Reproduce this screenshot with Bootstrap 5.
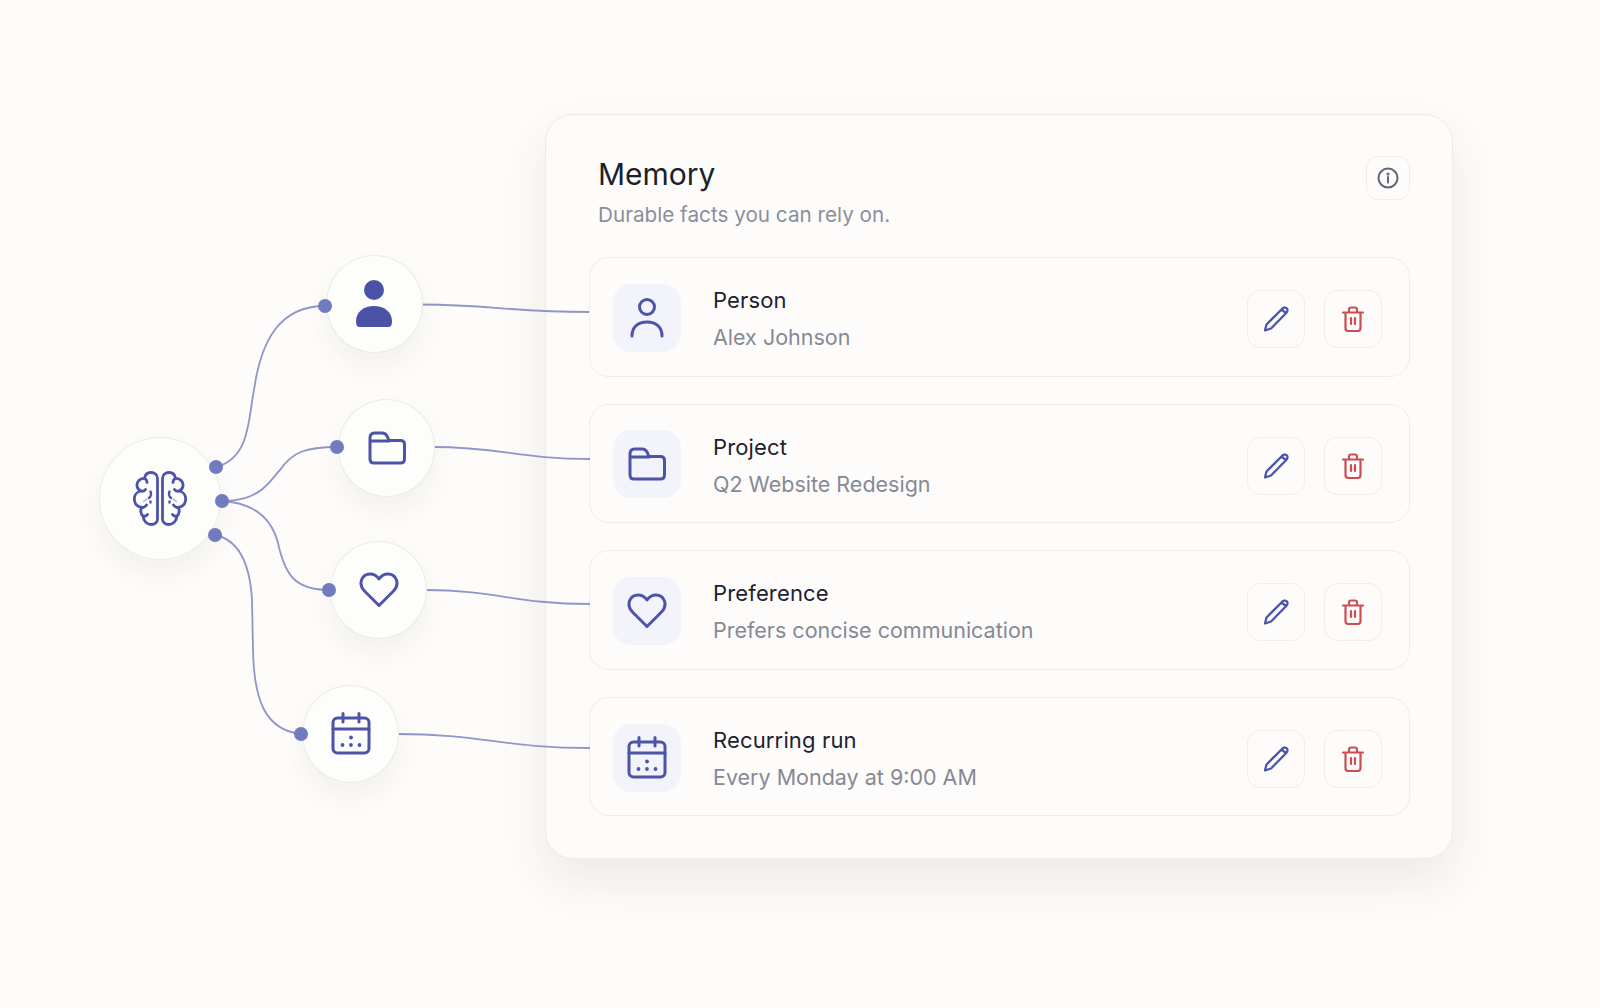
<!DOCTYPE html>
<html lang="en">
<head>
<meta charset="utf-8">
<title>Memory</title>
<link href="https://cdn.jsdelivr.net/npm/bootstrap@5.3.0/dist/css/bootstrap.min.css" rel="stylesheet">
<style>
html,body{height:100%;overflow:hidden}
body{background:#fdfcfa;font-family:Inter,"Liberation Sans",sans-serif;-webkit-font-smoothing:antialiased}
.stage{width:1600px;height:1008px;padding:114px 0 0 545px}
.wires{position:absolute;left:0;top:0;z-index:2;pointer-events:none}
.wires path{fill:none;stroke:#9095ca;stroke-width:1.8}
.pins{position:absolute;left:0;top:0;z-index:4;pointer-events:none}
.pins circle{fill:#717cc0}
.node{position:absolute;width:97px;height:98px;border-radius:50%;background:#fdfdfc;border:1.5px solid #ecebe8;box-shadow:0 14px 28px rgba(70,60,50,.06);z-index:3}
.node-brain{left:98.500px;top:436.500px;width:122px;height:123px}
.node-person{left:325.500px;top:254.500px}
.node-folder{left:337.500px;top:398.500px;padding-left:2px}
.node-heart{left:329.500px;top:540.500px;padding-left:2px}
.node-cal{left:301.500px;top:684.500px;padding-left:2px}
.ico{fill:none;stroke:#4c54aa;stroke-width:3;stroke-linecap:round;stroke-linejoin:round}
.panel{width:908px;height:745px;background:#fdfcfb;border:1.5px solid #ecebe8;border-radius:28px;box-shadow:0 22px 50px rgba(70,60,50,.09);padding:0 42px 0 42.500px}
.panel-head{height:142px;padding:41px 0 0 9.500px}
.panel-title{font-size:30px;font-weight:430;line-height:36px;color:#1b1f2e;margin:0 0 8px}
.panel-sub{font-size:20.700px;line-height:30px;color:#8b8e9c;margin:0}
.info-btn{width:44px;height:44px;border:1.5px solid #efeeeb;border-radius:12px;background:#fdfcfb;padding:0}
.fact-list{gap:27px}
.fact{height:119.600px;border:1.5px solid #eeedea;border-radius:20px;background:#fdfcfb;padding:2px 27px 0 23px}
.fact-badge{width:68px;height:68px;border-radius:18px;background:#f3f3fb;margin-right:32.500px}
.fact-text{padding-top:2px}
.fact-name{font-size:22px;font-weight:420;letter-spacing:.15px;line-height:32px;color:#1d2130;margin-bottom:5px}
.fact-val{font-size:21.500px;line-height:32px;color:#868995}
.act{width:58px;height:58px;border:1.5px solid #efeeeb;border-radius:13px;background:#fdfcfb;padding:0}
.act-wrap{gap:19px;margin-top:3px}
.red{stroke:#cb4f52}
.grey{stroke:#5f6675;stroke-width:2}
.faint{opacity:.45;stroke-width:1.4}
</style>
</head>
<body>
<svg width="0" height="0" class="d-block position-absolute">
  <defs>
    <symbol id="i-folder" viewBox="0 0 38 34"><path d="M2 7Q2 2 6.500 2H14Q17.500 2 19 5L21 9.500H32.500Q36.500 9.500 36.500 13.500V28Q36.500 32 32.500 32H6Q2 32 2 28ZM2 10H21"/></symbol>
    <symbol id="i-heart" viewBox="0 0 40 37"><path d="M20 34.500 5.500 20C-1.500 12.500 3 3 11 3 15 3 18 5 20 8 22 5 25 3 29 3 37 3 41.500 12.500 34.500 20Z"/></symbol>
    <symbol id="i-cal" viewBox="0 0 40 43"><rect x="2" y="6" width="36" height="35" rx="4.500"/><path d="M2 17H38M12 1.500V10M28 1.500V10"/><g fill="#4c54aa" stroke="none"><circle cx="20" cy="25.500" r="1.900"/><circle cx="11.500" cy="33" r="1.900"/><circle cx="20" cy="33" r="1.900"/><circle cx="28.500" cy="33" r="1.900"/></g></symbol>
    <symbol id="i-pencil" viewBox="0 0 26 26"><path d="M2 24.500 3.500 18.500 18.500 3.500C20 1.500 22 1 23.500 2.200 25 3.500 24.800 5.500 23 7.200L8 22.500ZM18.500 3.500 23 7.200"/></symbol>
    <symbol id="i-trash" viewBox="0 0 22 26"><path d="M1 6.500H21M3.500 6.500V22Q3.500 25 6.500 25H15.500Q18.500 25 18.500 22V6.500M7 6.500V3.500Q7 1.500 9 1.500H13Q15 1.500 15 3.500V6.500M9 12V18M13 12V18"/></symbol>
  </defs>
</svg>
<div class="stage position-relative">
  <svg class="wires" width="1600" height="1008" viewBox="0 0 1600 1008">
    <path d="M216 467C250 458 248 420 254 390 261 340 280 306 325 306"/>
    <path d="M222 501C262 501 270 480 280 470 292 452 306 447 337 447"/>
    <path d="M222 501C255 503 272 520 278 543 285 575 295 590 329 590"/>
    <path d="M215 535C240 540 250 565 252 600L253 650C254 700 265 730 301 734"/>
    <path d="M421 304.500C490 304.500 510 312 589 312"/>
    <path d="M433 447C500 447 520 459 590 459"/>
    <path d="M425 590C495 590 515 604 590 604"/>
    <path d="M397 734C480 734 505 748 590 748"/>
  </svg>
  <svg class="pins" width="1600" height="1008" viewBox="0 0 1600 1008">
    <circle cx="216" cy="467" r="7"/><circle cx="222" cy="501" r="7"/><circle cx="215" cy="535" r="7"/>
    <circle cx="325" cy="306" r="7"/><circle cx="337" cy="447" r="7"/><circle cx="329" cy="590" r="7"/><circle cx="301" cy="734" r="7"/>
  </svg>

  <div class="node node-brain d-flex align-items-center justify-content-center">
    <svg width="54" height="55" viewBox="0 0 54 55" class="ico" style="stroke-width:2.800">
      <g id="half">
        <path d="M24.500 48V7.500C24.500 3.500 21.500 1.500 18 1.500 14.500 1.500 12 3.500 11.500 7.500 7 7 3.500 11 4 15 4.300 17.500 6 19 8 20 3 21 .8 25 1.500 29.500 2 33 4.500 36 9 36.500 7 39 7.500 43 10 45 10.500 50 14 53.500 18 53.500 22 53.500 24.500 51 24.500 48Z"/>
        <path d="M11.500 7.500C13 8 14 9.500 14 11.500M8 20C9.500 20.500 11.500 20 12.500 18.500M9 36.500C11 36.500 12.500 35.500 13.500 34M10 45C11.500 45.500 13.500 45 14.500 43.500"/>
        <path d="M17.500 20.500C18.500 23 18 25.500 16 27M17.500 30.500V31.500" stroke-width="2.400"/>
        <path class="faint" d="M10.500 30.500 14 28"/>
      </g>
      <use href="#half" transform="matrix(-1 0 0 1 54 0)"/>
    </svg>
  </div>
  <div class="node node-person d-flex align-items-center justify-content-center">
    <svg width="38" height="48" viewBox="0 0 38 48" fill="#4a52a8"><circle cx="19" cy="10" r="10"/><path d="M1 41C1 32 9 26 19 26 29 26 37 32 37 41 37 45 36 47 33 47H5C2 47 1 45 1 41Z"/></svg>
  </div>
  <div class="node node-folder d-flex align-items-center justify-content-center"><svg width="38" height="34" class="ico"><use href="#i-folder"/></svg></div>
  <div class="node node-heart d-flex align-items-center justify-content-center"><svg width="40" height="37" class="ico"><use href="#i-heart"/></svg></div>
  <div class="node node-cal d-flex align-items-center justify-content-center"><svg width="40" height="43" class="ico"><use href="#i-cal"/></svg></div>

  <section class="panel">
    <header class="panel-head d-flex justify-content-between align-items-start">
      <div>
        <h1 class="panel-title">Memory</h1>
        <p class="panel-sub">Durable facts you can rely on.</p>
      </div>
      <button type="button" class="btn info-btn d-flex align-items-center justify-content-center" aria-label="Info">
        <svg width="22" height="22" viewBox="0 0 22 22" class="ico grey"><circle cx="11" cy="11" r="9.500"/><path d="M11 10V15.500"/><circle cx="11" cy="7" r=".6"/></svg>
      </button>
    </header>
    <div class="fact-list d-flex flex-column">
      <div class="fact d-flex align-items-center">
        <div class="fact-badge d-flex align-items-center justify-content-center flex-shrink-0">
          <svg width="34" height="42" viewBox="0 0 34 42" class="ico"><circle cx="17" cy="10" r="7.500"/><path d="M2 39C2 30 8 25 17 25 26 25 32 30 32 39"/></svg>
        </div>
        <div class="fact-text flex-grow-1"><div class="fact-name">Person</div><div class="fact-val">Alex Johnson</div></div>
        <div class="act-wrap d-flex">
          <button type="button" class="btn act d-flex align-items-center justify-content-center" aria-label="Edit"><svg width="26" height="26" class="ico" style="stroke-width:2.300"><use href="#i-pencil"/></svg></button>
          <button type="button" class="btn act d-flex align-items-center justify-content-center" aria-label="Delete"><svg width="22" height="26" class="ico red" style="stroke-width:2.200"><use href="#i-trash"/></svg></button>
        </div>
      </div>
      <div class="fact d-flex align-items-center">
        <div class="fact-badge d-flex align-items-center justify-content-center flex-shrink-0"><svg width="38" height="34" class="ico"><use href="#i-folder"/></svg></div>
        <div class="fact-text flex-grow-1"><div class="fact-name">Project</div><div class="fact-val">Q2 Website Redesign</div></div>
        <div class="act-wrap d-flex">
          <button type="button" class="btn act d-flex align-items-center justify-content-center" aria-label="Edit"><svg width="26" height="26" class="ico" style="stroke-width:2.300"><use href="#i-pencil"/></svg></button>
          <button type="button" class="btn act d-flex align-items-center justify-content-center" aria-label="Delete"><svg width="22" height="26" class="ico red" style="stroke-width:2.200"><use href="#i-trash"/></svg></button>
        </div>
      </div>
      <div class="fact d-flex align-items-center">
        <div class="fact-badge d-flex align-items-center justify-content-center flex-shrink-0"><svg width="40" height="37" class="ico"><use href="#i-heart"/></svg></div>
        <div class="fact-text flex-grow-1"><div class="fact-name">Preference</div><div class="fact-val">Prefers concise communication</div></div>
        <div class="act-wrap d-flex">
          <button type="button" class="btn act d-flex align-items-center justify-content-center" aria-label="Edit"><svg width="26" height="26" class="ico" style="stroke-width:2.300"><use href="#i-pencil"/></svg></button>
          <button type="button" class="btn act d-flex align-items-center justify-content-center" aria-label="Delete"><svg width="22" height="26" class="ico red" style="stroke-width:2.200"><use href="#i-trash"/></svg></button>
        </div>
      </div>
      <div class="fact d-flex align-items-center">
        <div class="fact-badge d-flex align-items-center justify-content-center flex-shrink-0"><svg width="40" height="43" class="ico"><use href="#i-cal"/></svg></div>
        <div class="fact-text flex-grow-1"><div class="fact-name">Recurring run</div><div class="fact-val">Every Monday at 9:00 AM</div></div>
        <div class="act-wrap d-flex">
          <button type="button" class="btn act d-flex align-items-center justify-content-center" aria-label="Edit"><svg width="26" height="26" class="ico" style="stroke-width:2.300"><use href="#i-pencil"/></svg></button>
          <button type="button" class="btn act d-flex align-items-center justify-content-center" aria-label="Delete"><svg width="22" height="26" class="ico red" style="stroke-width:2.200"><use href="#i-trash"/></svg></button>
        </div>
      </div>
    </div>
  </section>
</div>
<script src="https://cdn.jsdelivr.net/npm/bootstrap@5.3.0/dist/js/bootstrap.bundle.min.js"></script>
</body>
</html>
